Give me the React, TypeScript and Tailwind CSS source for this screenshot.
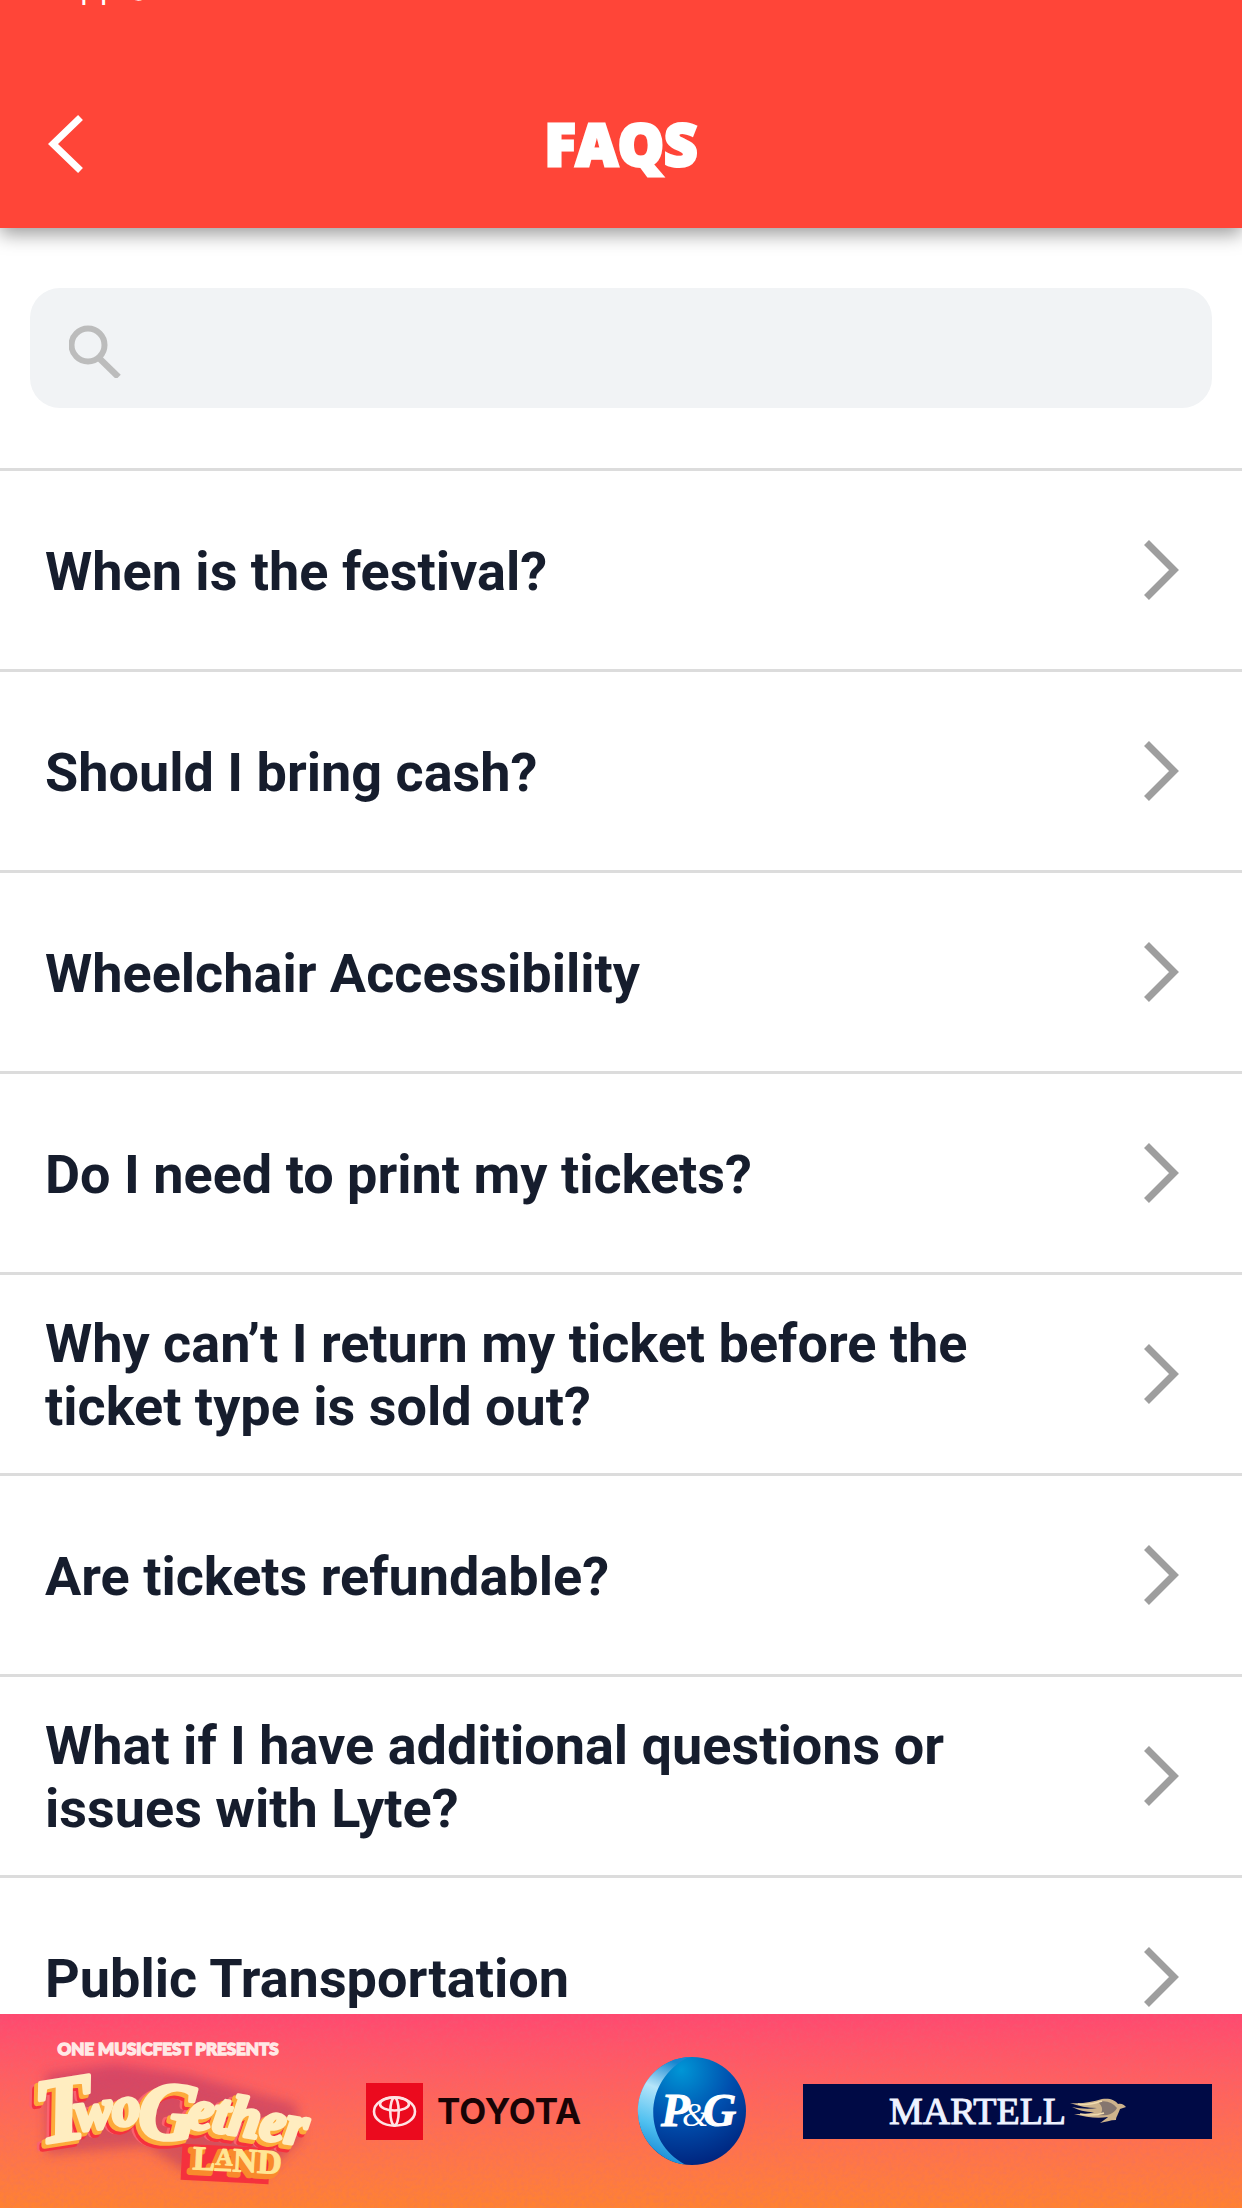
import { useState } from "react";

const faqs = [
    "When is the festival?",
    "Should I bring cash?",
    "Wheelchair Accessibility",
    "Do I need to print my tickets?",
    "Why can’t I return my ticket before the ticket type is sold out?",
    "Are tickets refundable?",
    "What if I have additional questions or issues with Lyte?",
    "Public Transportation",
];

function SearchIcon() {
    return (
        <svg className="w-[52px] h-[60px] shrink-0" viewBox="0 -8 52 60" fill="none" stroke="#bcbcbc">
            <circle cx="19" cy="19" r="16.5" strokeWidth="6" />
            <path d="M30.5 32.5 L49.5 51" strokeWidth="6.5" />
        </svg>
    );
}

// one pass of the lettering, repeated in several colours to build the extrusion
function Lettering() {
    return (
        <g fontFamily="'Liberation Serif', serif" fontWeight="700" fontStyle="italic">
            <text x="44" y="130" fontSize="92" transform="rotate(-9 44 130)">T</text>
            <text x="81" y="117" fontSize="56" transform="rotate(-7 81 117)">wo</text>
            <text x="141" y="123" fontSize="82" transform="rotate(4 141 123)">G</text>
            <text x="190" y="113" fontSize="57" transform="rotate(9 190 113)">ether</text>
        </g>
    );
}

function FestivalLogo() {
    return (
        <svg className="w-[280px] h-[194px] overflow-visible" viewBox="34 0 280 194" role="img" aria-label="TwoGether Land">
            <defs>
                <filter id="glow" x="-20%" y="-20%" width="140%" height="140%">
                    <feGaussianBlur stdDeviation="6" />
                </filter>
            </defs>
            <path d="M50 60 L118 50 L190 60 L300 90 L306 124 L270 160 L190 158 L150 132 L50 140 Z" fill="#a82a68" opacity="0.45" filter="url(#glow)" />
            <text x="172" y="41" textAnchor="middle" fill="#ffe9e6" stroke="#ffe9e6" strokeWidth="1.4" fontFamily="Lato, sans-serif" fontWeight="900" fontSize="17">ONE MUSICFEST PRESENTS</text>
            <g strokeLinejoin="round">
                <g transform="translate(-7 5)" fill="#f9626f" stroke="#f9626f" strokeWidth="7"><Lettering /></g>
                <g transform="translate(-5 6)" fill="#f5313d" stroke="#f5313d" strokeWidth="6"><Lettering /></g>
                <g transform="translate(-3 3)" fill="#fdaa3a" stroke="#fdaa3a" strokeWidth="6"><Lettering /></g>
                <g fill="#ffedc0" stroke="#ffedc0" strokeWidth="4"><Lettering /></g>
            </g>
            <g transform="rotate(3 230 140)" fontFamily="'Liberation Serif', serif" fontWeight="700" fontSize="34" strokeLinejoin="round">
                <path d="M212 130 H300 V166 H212 Z" transform="translate(-26 2)" fill="#f5313d" />
                <text x="194" y="160" fill="#f98a2c" stroke="#f98a2c" strokeWidth="6">L<tspan fontSize="24" dy="-6">A</tspan><tspan dy="6">ND</tspan></text>
                <text x="197" y="157" fill="#ffe694" stroke="#ffe694" strokeWidth="1">L<tspan fontSize="24" dy="-6">A</tspan><tspan dy="6">ND</tspan></text>
                <path d="M219 156 H236" stroke="#ffe694" strokeWidth="3" />
            </g>
        </svg>
    );
}

function ToyotaLogo() {
    return (
        <div className="flex items-center gap-[14px]">
            <svg className="w-[57px] h-[57px]" viewBox="0 0 57 57" fill="none" stroke="#ffe3e4" strokeWidth="2.6">
                <rect width="57" height="57" fill="#eb0a1e" stroke="none" />
                <ellipse cx="28.5" cy="28.5" rx="20.5" ry="14.2" />
                <ellipse cx="28.5" cy="28.5" rx="4.2" ry="13.8" />
                <ellipse cx="28.5" cy="21" rx="14.5" ry="6.5" />
            </svg>
            <span className="text-[35px] leading-[40px] font-bold font-[Inter,sans-serif] text-[#180406]">TOYOTA</span>
        </div>
    );
}

function PgLogo() {
    return (
        <svg className="w-[110px] h-[110px]" viewBox="0 0 110 110" role="img" aria-label="P&G">
            <defs>
                <radialGradient id="globe" cx="0.4" cy="0.12" r="0.95">
                    <stop offset="0" stopColor="#0096d6" />
                    <stop offset="0.5" stopColor="#004fae" />
                    <stop offset="1" stopColor="#001f78" />
                </radialGradient>
                <linearGradient id="crescent" x1="0.5" y1="0" x2="0.3" y2="1">
                    <stop offset="0" stopColor="#1685cf" />
                    <stop offset="0.3" stopColor="#b5e5fa" />
                    <stop offset="0.65" stopColor="#4fc0f0" />
                    <stop offset="1" stopColor="#0b7fd0" />
                </linearGradient>
            </defs>
            <circle cx="55" cy="55" r="54" fill="url(#globe)" />
            <path d="M52 1 A54 54 0 0 0 48 108.500 C5 86 5 24 52 1 Z" fill="url(#crescent)" />
            <g fill="#fff" fontFamily="'Liberation Serif', serif" fontStyle="italic">
                <text x="24" y="70" fontSize="47" fontWeight="700" stroke="#fff" strokeWidth="1">P</text>
                <text x="45" y="70" fontSize="34">&amp;</text>
                <text x="66" y="70" fontSize="46" fontWeight="700" stroke="#fff" strokeWidth="1">G</text>
            </g>
        </svg>
    );
}

function MartellLogo() {
    return (
        <div className="w-[409px] h-[55px] bg-[#000a45] flex items-center justify-center gap-1">
            <span className="text-[38px] leading-[40px] font-['Liberation_Serif',serif] text-[#eef2ff] [-webkit-text-stroke:1px_#eef2ff]">MARTELL</span>
            <svg className="w-[56px] h-[26px]" viewBox="0 0 56 26">
                <path d="M0 5 C12 6 22 4 32 1 C40 0 45 2 48 6 C52 5 54 7 56 9 L50 11 C48 17 46 19 46 22 C40 22 36 24 30 25 C34 22 37 20 38 19 C27 21 16 19 4 16 C12 16 18 16 24 14 C15 14 8 12 2 9 C11 11 20 11 27 10 C18 10 8 8 0 5 Z" fill="#cdb38c" />
                <path d="M28 4 C36 2 42 4 47 10 C43 17 36 18 28 17 C34 15 33 8 28 4 Z" fill="#84766f" />
                <path d="M8 6 C18 8 26 5 32 3 M10 16 C20 18 28 17 34 15" fill="none" stroke="#f1dcae" strokeWidth="1.5" />
            </svg>
        </div>
    );
}

function Grain() {
    return (
        <svg className="absolute inset-0 w-full h-full opacity-30" aria-hidden="true">
            <filter id="grain">
                <feTurbulence type="fractalNoise" baseFrequency="0.28" numOctaves="2" />
                <feColorMatrix values="0 0 0 0 0.75  0 0 0 0 0.15  0 0 0 0 0.2  1.6 0 0 0 -0.6" />
            </filter>
            <rect width="100%" height="100%" filter="url(#grain)" />
        </svg>
    );
}

export default function App() {
    const [query, setQuery] = useState("");

    return (
        <div className="h-screen flex flex-col overflow-hidden bg-white font-[Roboto,sans-serif]">
            <header className="relative z-10 bg-[#ff4538] shadow-[0_6px_18px_rgba(0,0,0,0.4)]">
                <div className="h-[5px] flex items-end overflow-hidden pl-[58px]">
                    <span className="text-[32px] leading-[32px] font-[Inter,sans-serif] text-white">App Store</span>
                </div>
                <div className="grid grid-cols-[1fr_auto_1fr] items-center px-12 pt-[55px]">
                    <button type="button" aria-label="Back" className="w-9 h-[60px]">
                        <svg viewBox="0 0 36 60" fill="none" stroke="#fff" strokeWidth="7">
                            <path d="M32.5 3.5 L5 30 L32.5 56.5" />
                        </svg>
                    </button>
                    <h1 className="text-[58px] leading-[168px] font-extrabold font-['Open_Sans',sans-serif] text-white [-webkit-text-stroke:3px_#fff]">FAQS</h1>
                </div>
            </header>
            <main className="grow min-h-0 overflow-hidden">
                <div className="px-[30px] py-[60px]">
                    <label className="h-[120px] rounded-[30px] bg-[#f1f3f5] flex items-center gap-6 px-[39px]">
                        <SearchIcon />
                        <input type="search" aria-label="Search" value={query} onChange={(e) => setQuery(e.target.value)} className="grow text-[48px] outline-none" />
                    </label>
                </div>
                <ul>
                    {faqs.filter((faq) => faq.toLowerCase().includes(query.toLowerCase())).map((faq) => (
                        <li key={faq} className="border-t-3 border-[#dcdcdc]">
                            <a href="#" className="min-h-[198px] flex items-center justify-between pl-[45px] pr-[63px]">
                                <span className="max-w-[960px] pt-0.5 text-[54px] leading-[63px] font-bold text-[#161d2d]">{faq}</span>
                                <svg className="w-9 h-[60px] shrink-0" viewBox="0 0 36 60" fill="none" stroke="#9e9e9e" strokeWidth="7">
                                    <path d="M3.5 2.5 L31 30 L3.5 57.5" />
                                </svg>
                            </a>
                        </li>
                    ))}
                </ul>
            </main>
            <footer className="relative shrink-0 bg-linear-to-b from-[#ff4870] to-[#ff8230]">
                <Grain />
                <div className="relative flex items-center justify-between px-[30px]">
                    <FestivalLogo />
                    <ToyotaLogo />
                    <PgLogo />
                    <MartellLogo />
                </div>
            </footer>
        </div>
    );
}
